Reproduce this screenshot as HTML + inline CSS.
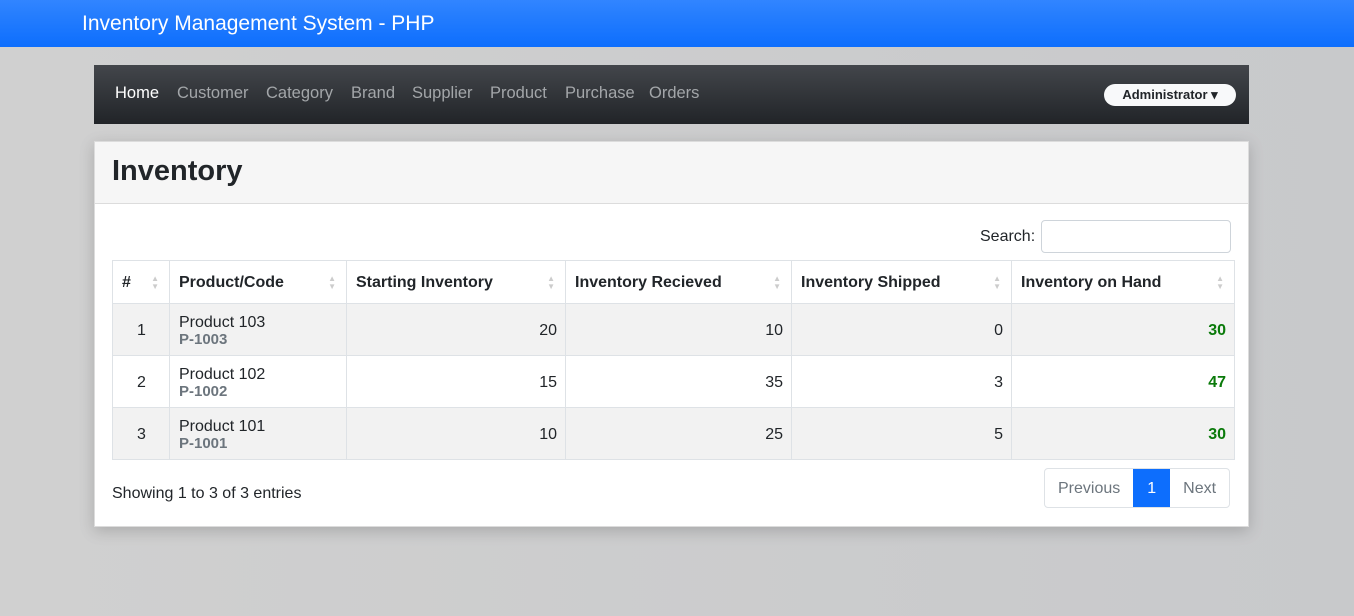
<!DOCTYPE html>
<html><head><style>
*{box-sizing:border-box;margin:0;padding:0}
body{width:1354px;height:616px;background:linear-gradient(90deg,#d0d0d0,#c8c9cb);font-family:"Segoe UI","Liberation Sans",sans-serif;color:#212529;position:relative;overflow:hidden}
.top{height:47px;background:linear-gradient(#3185ff,#0d6efd);color:#fff;font-size:21px;padding-left:82px;line-height:48px}
.nav{position:absolute;left:94px;top:65px;width:1155px;height:59px;background:linear-gradient(#43464b,#212428);}
.nav span{position:absolute;top:19px;font-size:16.5px;color:#a3a6a9}
.adm{position:absolute;left:1010px;top:19px;width:132px;height:22px;border-radius:11px;background:#f8f9fa;font-size:13px;font-weight:bold;color:#212529;text-align:center;line-height:22px}
.card{position:absolute;left:94px;top:141px;width:1155px;height:386px;background:#fff;border:1px solid #dcdcdc;box-shadow:0 4px 14px rgba(0,0,0,.18)}
.ch{height:62px;background:#f6f6f6;border-bottom:1px solid #dcdcdc;font-size:29px;font-weight:600;padding-left:17px;line-height:58px}
.search{position:absolute;left:885px;top:86px;font-size:16px}
.sb{position:absolute;left:946px;top:78px;width:190px;height:33px;border:1px solid #ced4da;border-radius:4px}
table{position:absolute;left:17px;top:118px;border-collapse:collapse;font-size:16px}
td,th{border:1px solid #dee2e6;padding:2px 8px 0 9px}
th{height:43px;text-align:left;font-weight:bold;position:relative}
th i{position:absolute;right:10px;top:14px;font-style:normal;font-size:8px;color:#ccc;line-height:8px}
td{height:52px;text-align:right}
tr.o td{background:#f2f2f2}
td.c{text-align:center}
td.l{text-align:left;line-height:17px}
td.l b{color:#6c757d;font-size:15px}
td.g{color:#0a7a0a;font-weight:bold}
.show{position:absolute;left:17px;top:343px;font-size:16px}
.pg{position:absolute;left:949px;top:326px;height:40px;display:flex;border:1px solid #dee2e6;border-radius:4px;font-size:16px;color:#6c757d;line-height:40px}
.pg div{padding:0 13px}
.pg .a{background:#0d6efd;color:#fff;padding:0 14px}
</style></head><body>
<div class="top">Inventory Management System - PHP</div>
<div class="nav">
<span style="left:21px;color:#fff">Home</span><span style="left:83px">Customer</span><span style="left:172px">Category</span><span style="left:257px">Brand</span><span style="left:318px">Supplier</span><span style="left:396px">Product</span><span style="left:471px">Purchase</span><span style="left:555px">Orders</span>
<div class="adm">Administrator ▾</div>
</div>
<div class="card">
<div class="ch">Inventory</div>
<div class="search">Search:</div><div class="sb"></div>
<table>
<tr><th style="width:57px">#<i>▲<br>▼</i></th><th style="width:177px">Product/Code<i>▲<br>▼</i></th><th style="width:219px">Starting Inventory<i>▲<br>▼</i></th><th style="width:226px">Inventory Recieved<i>▲<br>▼</i></th><th style="width:220px">Inventory Shipped<i>▲<br>▼</i></th><th style="width:223px">Inventory on Hand<i>▲<br>▼</i></th></tr>
<tr class="o"><td class="c">1</td><td class="l">Product 103<br><b>P-1003</b></td><td>20</td><td>10</td><td>0</td><td class="g">30</td></tr>
<tr><td class="c">2</td><td class="l">Product 102<br><b>P-1002</b></td><td>15</td><td>35</td><td>3</td><td class="g">47</td></tr>
<tr class="o"><td class="c">3</td><td class="l">Product 101<br><b>P-1001</b></td><td>10</td><td>25</td><td>5</td><td class="g">30</td></tr>
</table>
<div class="show">Showing 1 to 3 of 3 entries</div>
<div class="pg"><div>Previous</div><div class="a">1</div><div>Next</div></div>
</div>
</body></html>
